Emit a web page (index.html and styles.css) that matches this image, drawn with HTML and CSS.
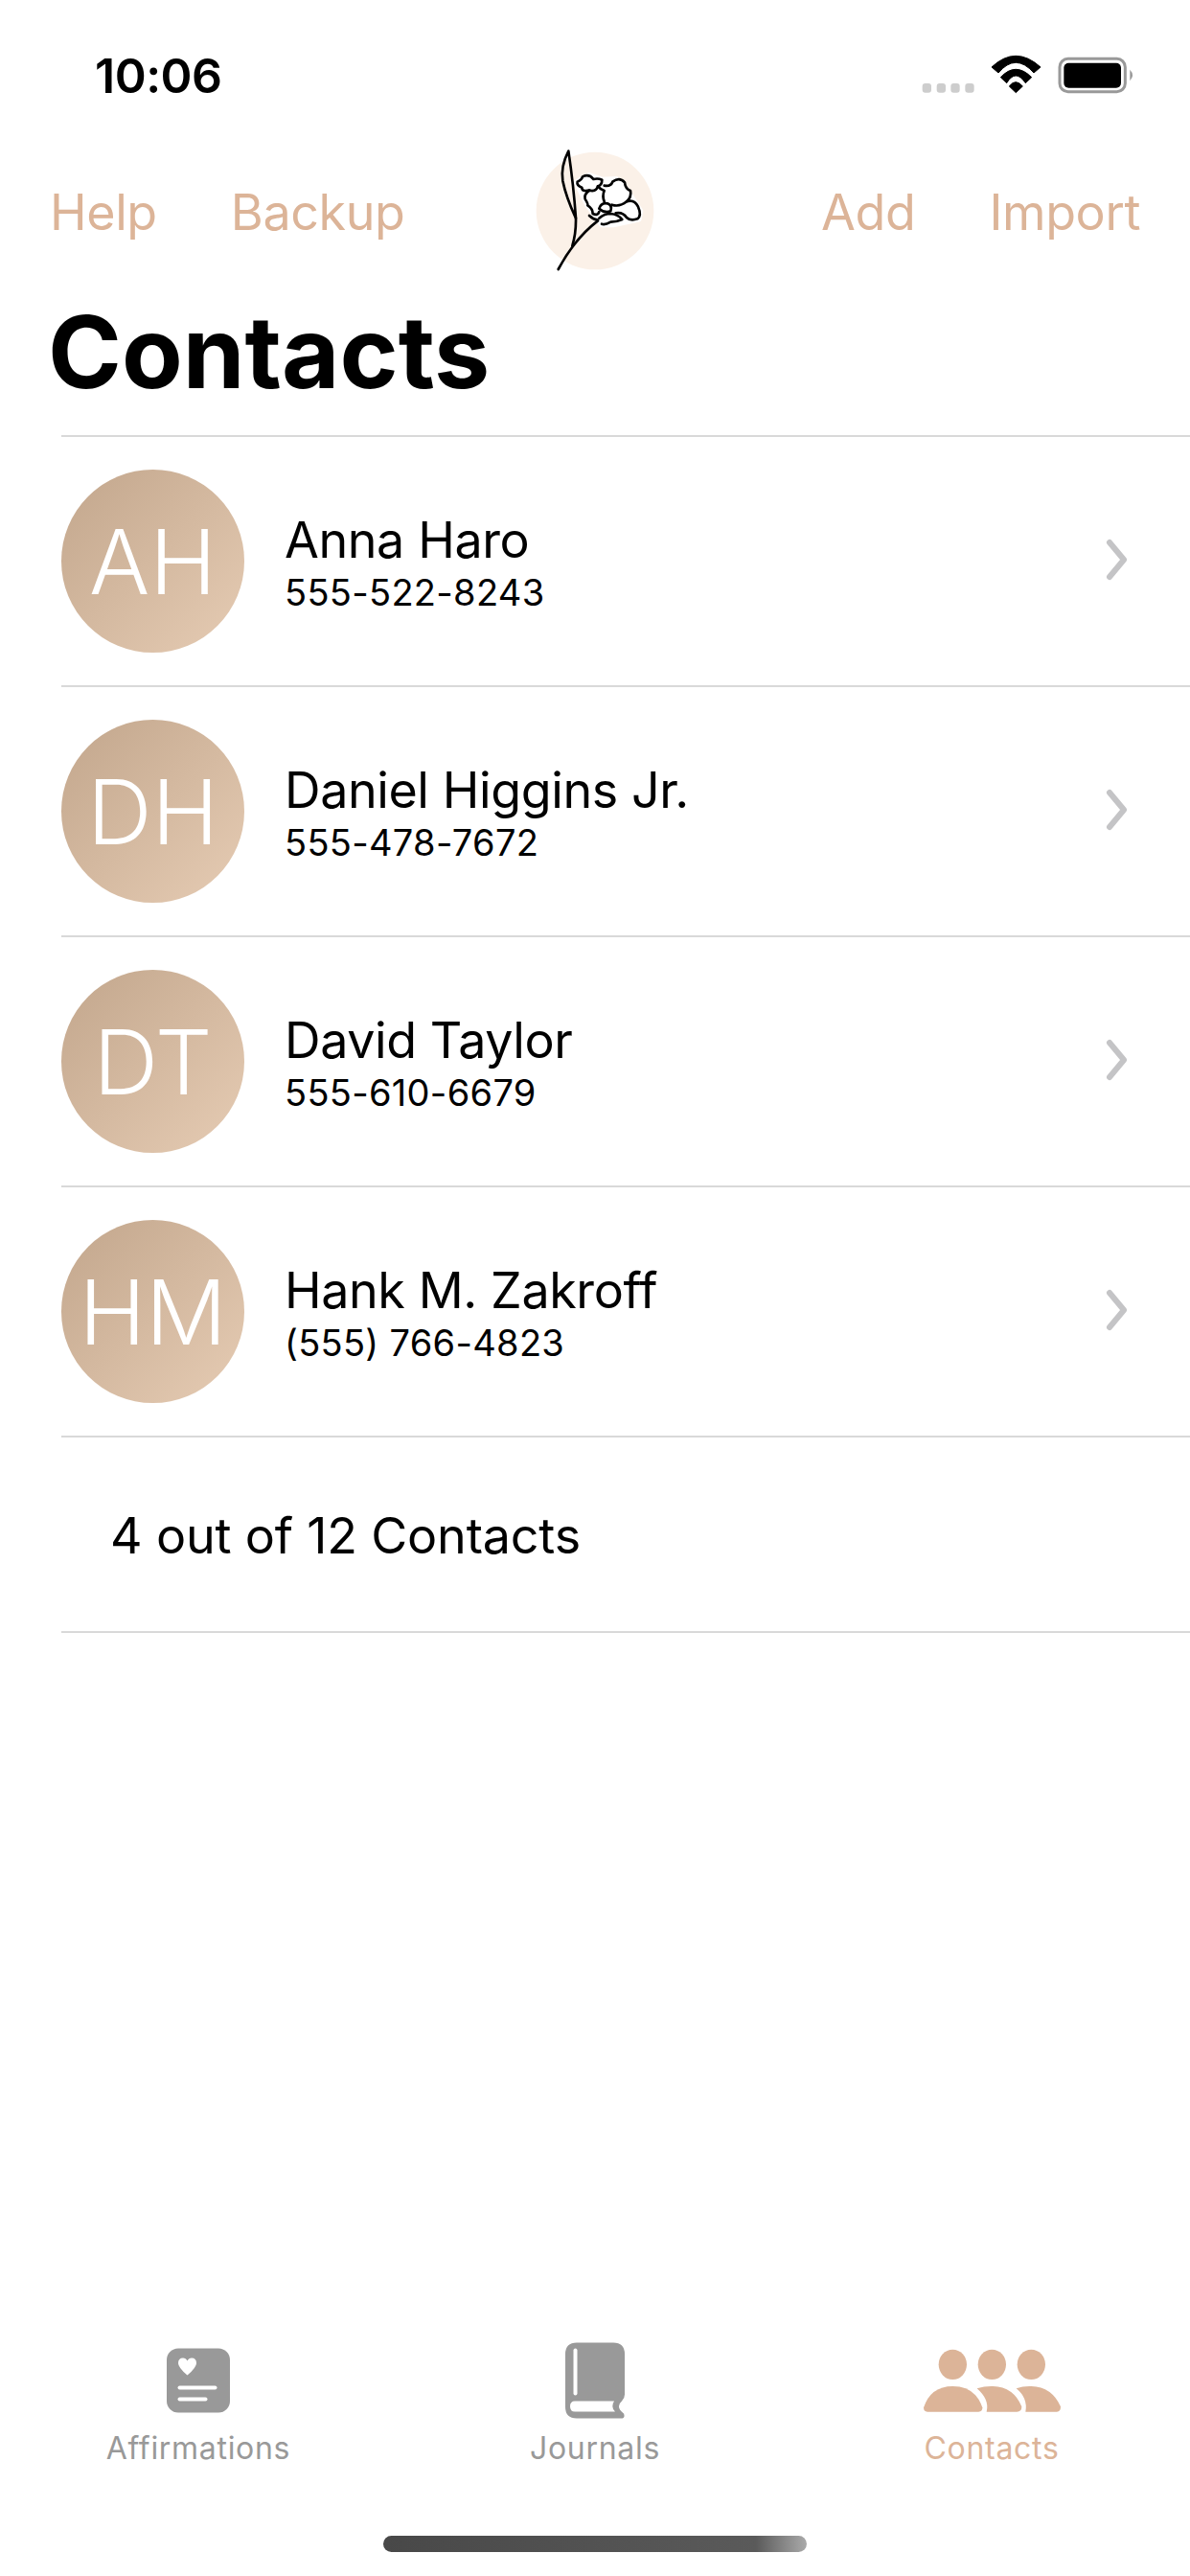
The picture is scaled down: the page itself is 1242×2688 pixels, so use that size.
FILE: index.html
```html
<!DOCTYPE html>
<html lang="en">
<head>
    <meta charset="UTF-8">
    <meta name="viewport" content="width=device-width, initial-scale=1.0">
    <title>Contacts</title>
    <link rel="stylesheet" href="styles.css">
</head>
<body>
    <div class="page">
        <div class="status-bar">
            <span class="time">10:06</span>
            <svg class="status-icons" viewBox="0 0 810 240" aria-hidden="true">
                <rect x="98" y="141" width="28" height="29" rx="9" fill="#cdcdcd"/>
                <rect x="143" y="141" width="28" height="29" rx="9" fill="#cdcdcd"/>
                <rect x="187" y="141" width="28" height="29" rx="9" fill="#cdcdcd"/>
                <rect x="232" y="141" width="28" height="29" rx="9" fill="#cdcdcd"/>
                <path d="M315 90Q390 20 468 90L447 108Q390 44 336 108Z" fill="#000" stroke="#000" stroke-width="3" stroke-linejoin="round"/>
                <path d="M343 122Q390 72 440 122L421 140Q390 94 362 140Z" fill="#000" stroke="#000" stroke-width="3" stroke-linejoin="round"/>
                <path d="M370 150Q390 124 412 150L391 170Z" fill="#000" stroke="#000" stroke-width="3" stroke-linejoin="round"/>
                <rect x="528" y="64" width="205" height="103" rx="26" fill="none" stroke="#999" stroke-width="9"/>
                <rect x="541" y="77" width="179" height="78" rx="15" fill="#000"/>
                <path d="M748 98Q764 115 748 133Z" fill="#999"/>
            </svg>
        </div>

        <div class="nav">
            <div class="nav-links">
                <a class="nav-link">Help</a>
                <a class="nav-link">Backup</a>
            </div>
            <svg class="logo" viewBox="33 29 660 480" aria-hidden="true">
                <circle cx="363" cy="269" r="184" fill="#fbf1e8"/>
                <g fill="#fff" stroke="#fff" stroke-width="18" stroke-linejoin="round">
                    <path d="M305 180L345 158L385 172L430 170L460 200L505 270L500 295L420 312L385 312L340 250Z"/>
                </g>
                <g fill="none" stroke="#000" stroke-width="8" stroke-linecap="round" stroke-linejoin="round">
                    <path d="M280 82Q255 130 262 175Q272 225 303 292Q296 190 280 82Z"/>
                    <path d="M303 292Q304 340 292 378"/>
                    <path d="M372 300Q300 355 248 452"/>
                    <path d="M345 284Q358 296 372 298"/>
                    <path d="M385 172Q385 188 372 192Q368 210 345 205Q322 210 322 196Q305 190 308 178Q322 172 324 162Q345 152 358 170Q372 166 385 172Z"/>
                    <path d="M345 205Q328 218 332 232Q342 248 340 252Q356 262 356 278Q372 285 376 272"/>
                    <path d="M372 192Q378 200 392 206Q385 222 392 240"/>
                    <path d="M392 190Q412 194 418 178Q440 162 456 180Q458 200 474 206Q478 226 462 240"/>
                    <path d="M376 262Q382 242 402 246Q418 252 412 270Q394 278 376 262Z"/>
                    <path d="M416 250Q440 258 462 240Q486 232 498 256Q510 284 496 294Q474 302 462 290Q450 272 428 276"/>
                    <path d="M376 292Q392 278 412 278Q436 280 448 296Q430 304 412 304Q394 314 384 310"/>
                </g>
            </svg>
            <div class="nav-links nav-links-right">
                <a class="nav-link">Add</a>
                <a class="nav-link">Import</a>
            </div>
        </div>

        <h1 class="title">Contacts</h1>

        <div class="contact-list">
            <div class="contact-row">
                <div class="avatar">AH</div>
                <div class="contact-info">
                    <div class="contact-name">Anna Haro</div>
                    <div class="contact-phone">555-522-8243</div>
                </div>
                <svg class="chevron" viewBox="0 0 28 44" aria-hidden="true"><path d="M8 4L23 22L8 40"/></svg>
            </div>
            <div class="contact-row">
                <div class="avatar">DH</div>
                <div class="contact-info">
                    <div class="contact-name">Daniel Higgins Jr.</div>
                    <div class="contact-phone">555-478-7672</div>
                </div>
                <svg class="chevron" viewBox="0 0 28 44" aria-hidden="true"><path d="M8 4L23 22L8 40"/></svg>
            </div>
            <div class="contact-row">
                <div class="avatar">DT</div>
                <div class="contact-info">
                    <div class="contact-name">David Taylor</div>
                    <div class="contact-phone">555-610-6679</div>
                </div>
                <svg class="chevron" viewBox="0 0 28 44" aria-hidden="true"><path d="M8 4L23 22L8 40"/></svg>
            </div>
            <div class="contact-row">
                <div class="avatar">HM</div>
                <div class="contact-info">
                    <div class="contact-name">Hank M. Zakroff</div>
                    <div class="contact-phone">(555) 766-4823</div>
                </div>
                <svg class="chevron" viewBox="0 0 28 44" aria-hidden="true"><path d="M8 4L23 22L8 40"/></svg>
            </div>
            <div class="contact-count">4 out of 12 Contacts</div>
        </div>

        <div class="tab-bar">
            <div class="tab">
                <svg class="tab-icon" width="66" height="67" viewBox="0 0 66 67" aria-hidden="true">
                    <rect width="66" height="67" rx="12" fill="#999"/>
                    <path d="M21.5 28Q12 20 12 15.500Q12 10 17 10Q20 10 21.500 13Q23 10 26 10Q31 10 31 15.500Q31 20 21.500 28Z" fill="#fff"/>
                    <rect x="11.500" y="39" width="41" height="4" rx="2" fill="#fff"/>
                    <rect x="11.500" y="51" width="31" height="4" rx="2" fill="#fff"/>
                </svg>
                <span class="tab-label">Affirmations</span>
            </div>
            <div class="tab">
                <svg class="tab-icon" width="62" height="79" viewBox="0 0 62 79" aria-hidden="true">
                    <path d="M12 0H50Q62 0 62 12V54Q62 58 59 61Q52 67 61 74Q63 79 58 79H12Q0 79 0 67V12Q0 0 12 0Z" fill="#999"/>
                    <rect x="8.500" y="6" width="4" height="49" rx="2" fill="#fff"/>
                    <path d="M10 61H51Q47 67 52 72H10Q5 72 5 66.500Q5 61 10 61Z" fill="#fff"/>
                </svg>
                <span class="tab-label">Journals</span>
            </div>
            <div class="tab tab-active">
                <svg class="tab-icon" width="143" height="65" viewBox="128 92 429 196" aria-hidden="true">
                    <ellipse cx="219" cy="140" rx="44" ry="47"/>
                    <ellipse cx="342" cy="140" rx="44" ry="47"/>
                    <ellipse cx="465" cy="140" rx="44" ry="47"/>
                    <path d="M128 275Q150 208 219 208Q290 208 312 275Q312 288 300 288H140Q128 288 128 275Z"/>
                    <path d="M295 215Q320 207 345 208Q410 210 435 272Q435 288 420 288H325Q335 250 295 215Z"/>
                    <path d="M418 215Q440 207 465 208Q530 210 557 272Q557 288 545 288H447Q455 245 418 215Z"/>
                </svg>
                <span class="tab-label">Contacts</span>
            </div>
        </div>

        <div class="home-indicator"></div>
    </div>
</body>
</html>
```

FILE: styles.css
```css
* {
    box-sizing: border-box;
}
body {
    margin: 0;
    background: #fff;
    font-family: Inter, "Noto Sans", sans-serif;
    color: #000;
}
.page {
    display: flex;
    flex-direction: column;
    width: 1242px;
    height: 2688px;
    overflow: hidden;
}
.status-bar {
    display: flex;
    justify-content: space-between;
    align-items: center;
    height: 80px;
    margin-top: 40px;
    padding: 0 42px 0 99px;
}
.time {
    margin-bottom: 3px;
    font-size: 50px;
    font-weight: 600;
    letter-spacing: -0.5px;
}
.status-icons {
    width: 270px;
    height: 80px;
}
.nav {
    display: grid;
    grid-template-columns: 1fr 220px 1fr;
    align-items: center;
    height: 160px;
    margin-top: 20px;
    padding: 0 52px;
}
.nav-links {
    display: flex;
    gap: 77px;
    padding-top: 4px;
}
.nav-links-right {
    justify-content: flex-end;
}
.nav-link {
    color: #dcb498;
    font-size: 52px;
    line-height: 64px;
    letter-spacing: -0.4px;
}
.logo {
    width: 220px;
    height: 160px;
}
.title {
    margin: 7px 0 27px;
    padding-left: 50px;
    font-size: 104px;
    font-weight: 700;
    line-height: 120px;
}
.contact-list {
    flex: 1;
    margin: 0 0 0 64px;
}
.contact-row {
    display: flex;
    align-items: center;
    height: 261px;
    padding-right: 64px;
    border-top: 2px solid #d9d9d9;
}
.avatar {
    display: flex;
    align-items: center;
    justify-content: center;
    flex: none;
    width: 191px;
    height: 191px;
    border-radius: 50%;
    background: linear-gradient(135deg, #c2a68c, #e6ccb4);
    color: #fff;
    font-size: 94px;
    font-weight: 350;
}
.contact-info {
    flex: 1;
    margin-left: 42px;
    padding-top: 4px;
}
.contact-name {
    font-size: 52px;
    line-height: 58px;
    letter-spacing: -0.4px;
}
.contact-phone {
    margin-top: 3px;
    font-size: 38px;
    line-height: 44px;
    letter-spacing: 0.3px;
}
.chevron {
    width: 28px;
    height: 44px;
    margin-bottom: 4px;
    fill: none;
    stroke: #c4c4c6;
    stroke-width: 6;
    stroke-linecap: round;
    stroke-linejoin: round;
}
.contact-count {
    height: 206px;
    padding-left: 51px;
    border-top: 2px solid #d9d9d9;
    border-bottom: 2px solid #d9d9d9;
    font-size: 52px;
    line-height: 205px;
    letter-spacing: -0.17px;
}
.tab-bar {
    display: grid;
    grid-template-columns: repeat(3, 414px);
}
.tab {
    display: flex;
    flex-direction: column;
    align-items: center;
    color: #999;
}
.tab-active {
    color: #dcb498;
}
.tab-icon {
    height: 80px;
    fill: currentColor;
}
.tab-label {
    margin-top: 11px;
    font-size: 32px;
    line-height: 40px;
    letter-spacing: 0.7px;
}
.home-indicator {
    width: 442px;
    height: 17px;
    margin: 71px auto 25px;
    border-radius: 9px;
    background: linear-gradient(90deg, #484848, #5a5a5a 88%, #aaa);
}
```
